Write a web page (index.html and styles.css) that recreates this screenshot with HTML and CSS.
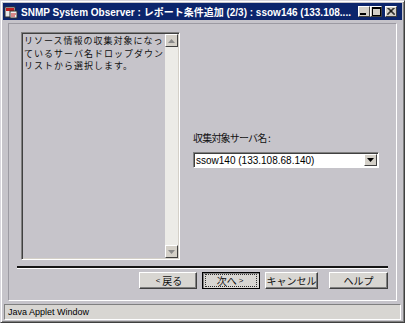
FILE: index.html
```html
<!DOCTYPE html>
<html lang="ja">
<head>
    <meta charset="UTF-8">
    <title>SNMP System Observer : レポート条件追加 (2/3)</title>
    <link rel="stylesheet" href="styles.css">
</head>
<body>
    <div class="window">
        <div class="titlebar">
            <svg class="app-icon" width="14" height="14" viewBox="0 0 14 14">
                <rect x="1" y="2" width="10" height="10" fill="#e8e8e8" stroke="#303030" stroke-width="1"/>
                <rect x="2" y="3" width="8" height="3" fill="#c02020"/>
                <rect x="6" y="6" width="7" height="7" fill="#f0f0f0" stroke="#303030" stroke-width="1"/>
                <path d="M7 9 L12 9 M7 11 L11 11" stroke="#c02020" stroke-width="1"/>
            </svg>
            <span class="title">SNMP System Observer : レポート条件追加 (2/3) : ssow146 (133.108....</span>
            <div class="title-buttons">
                <span class="tbtn"><svg width="8" height="7" viewBox="0 0 8 7"><rect x="0" y="5" width="6" height="2" fill="#000"/></svg></span>
                <span class="tbtn"><svg width="9" height="9" viewBox="0 0 9 9"><rect x="0.5" y="0.5" width="8" height="8" fill="none" stroke="#000"/><rect x="0" y="0" width="9" height="2" fill="#000"/></svg></span>
                <span class="tbtn close"><svg width="8" height="7" viewBox="0 0 8 7"><path d="M0.5 0 L7.5 7 M1.5 0 L8 6.5 M7.5 0 L0.5 7 M6.5 0 L0 6.5" stroke="#000" stroke-width="1"/></svg></span>
            </div>
        </div>

        <div class="panel">
            <div class="content">
                <div class="textarea">
                    <div class="textarea-text">
                        <div class="line">リソース情報の収集対象になっ</div>
                        <div class="line">ているサーバ名ドロップダウン</div>
                        <div class="line">リストから選択します。</div>
                    </div>
                    <div class="vscroll">
                        <div class="sb-btn"><svg width="7" height="4" viewBox="0 0 7 4"><path d="M3.5 0 L7 4 L0 4 Z" fill="#8a8a8a"/></svg></div>
                        <div class="sb-track"></div>
                        <div class="sb-btn"><svg width="7" height="4" viewBox="0 0 7 4"><path d="M0 0 L7 0 L3.5 4 Z" fill="#8a8a8a"/></svg></div>
                    </div>
                </div>
                <div class="field">
                    <label class="field-label">収集対象サーバ名 :</label>
                    <div class="select">
                        <span class="select-value">ssow140 (133.108.68.140)</span>
                        <span class="select-btn"><svg width="7" height="4" viewBox="0 0 7 4"><path d="M0 0 L7 0 L3.5 4 Z" fill="#000"/></svg></span>
                    </div>
                </div>
            </div>
            <div class="separator"></div>
            <div class="buttons">
                <button class="btn btn-back"><span class="lt">&lt;</span>戻る</button>
                <button class="btn btn-next default"><span class="focus">次へ<span class="lt">&gt;</span></span></button>
                <button class="btn btn-cancel">キャンセル</button>
                <button class="btn btn-help">ヘルプ</button>
            </div>
        </div>

        <div class="statusbar">Java Applet Window</div>
    </div>
</body>
</html>
```

FILE: styles.css
```css
body {
    margin: 0;
    background: #ffffff;
    font-family: "Noto Sans CJK JP", "Liberation Sans", sans-serif;
}
.window {
    width: 405px;
    height: 323px;
    box-sizing: border-box;
    background: #c6c4ca;
    border: 1px solid;
    border-color: #d8d6dc #404040 #404040 #d8d6dc;
    box-shadow: inset 1px 1px 0 #ffffff, inset -1px -1px 0 #808080;
    padding: 2px;
    display: flex;
    flex-direction: column;
}
.titlebar {
    height: 17px;
    background: #0c256c;
    display: flex;
    align-items: center;
    padding-left: 1px;
    flex-shrink: 0;
}
.app-icon {
    flex-shrink: 0;
}
.title {
    margin-left: 3px;
    color: #ffffff;
    font-family: "Liberation Sans", "Noto Sans CJK JP", sans-serif;
    font-weight: bold;
    font-size: 10px;
    white-space: nowrap;
    overflow: hidden;
    flex: 1;
}
.title-buttons {
    display: flex;
    margin-right: 5px;
}
.tbtn {
    width: 12px;
    height: 11px;
    box-sizing: border-box;
    background: #d4d0c8;
    border: 1px solid;
    border-color: #ffffff #404040 #404040 #ffffff;
    display: flex;
    align-items: center;
    justify-content: center;
}
.tbtn.close {
    margin-left: 3px;
}
.panel {
    margin: 3px 5px 0 5px;
    flex: 1;
    border: 1px solid;
    border-color: #9c9aa2 #ffffff #ffffff #9c9aa2;
    display: flex;
    flex-direction: column;
}
.content {
    display: flex;
    padding: 8px 0 0 12px;
}
.textarea {
    width: 159px;
    height: 228px;
    box-sizing: border-box;
    border: 1px solid;
    border-color: #808080 #ffffff #ffffff #808080;
    box-shadow: inset 1px 1px 0 #404040, inset -1px -1px 0 #d4d0c8;
    display: flex;
    padding: 1px 1px 1px 2px;
}
.textarea-text {
    flex: 1;
    padding-top: 1px;
}
.line {
    height: 12.5px;
    font-size: 9px;
    line-height: 12.5px;
    letter-spacing: 1px;
    color: #101010;
    white-space: nowrap;
}
.vscroll {
    width: 13px;
    display: flex;
    flex-direction: column;
    background: #ecebe7;
}
.sb-btn {
    height: 13px;
    box-sizing: border-box;
    background: #d4d0c8;
    border: 1px solid;
    border-color: #ffffff #404040 #404040 #ffffff;
    display: flex;
    align-items: center;
    justify-content: center;
}
.sb-track {
    flex: 1;
}
.field {
    margin-left: 13px;
    padding-top: 99px;
    display: flex;
    flex-direction: column;
}
.field-label {
    font-size: 10px;
    line-height: 14px;
    letter-spacing: -0.8px;
    color: #101010;
}
.select {
    margin-top: 7px;
    width: 186px;
    height: 16px;
    box-sizing: border-box;
    background: #ffffff;
    border: 1px solid;
    border-color: #808080 #ffffff #ffffff #808080;
    box-shadow: inset 1px 1px 0 #404040;
    display: flex;
    align-items: stretch;
    padding: 1px 1px 0 2px;
}
.select-value {
    flex: 1;
    font-family: "Liberation Sans", sans-serif;
    font-size: 10px;
    line-height: 13px;
    color: #000000;
}
.select-btn {
    width: 13px;
    box-sizing: border-box;
    background: #d4d0c8;
    border: 1px solid;
    border-color: #ffffff #404040 #404040 #ffffff;
    display: flex;
    align-items: center;
    justify-content: center;
    margin-bottom: 1px;
}
.separator {
    margin: 6px 8px 0 8px;
    border-top: 2px solid #161616;
    border-bottom: 1px solid #ffffff;
}
.buttons {
    display: flex;
    justify-content: flex-end;
    padding-right: 8px;
    margin-top: 3px;
}
.btn {
    height: 17px;
    box-sizing: border-box;
    padding: 0;
    margin: 0;
    background: #d8d6d2;
    border: 1px solid;
    border-color: #ffffff #404040 #404040 #ffffff;
    box-shadow: inset -1px -1px 0 #808080;
    font-family: "Noto Sans CJK JP", sans-serif;
    font-size: 10px;
    line-height: 13px;
    color: #101010;
    display: flex;
    align-items: center;
    justify-content: center;
}
.btn-back {
    width: 58px;
}
.btn-next {
    width: 58px;
    margin-left: 5px;
}
.btn-cancel {
    width: 53px;
    margin-left: 5px;
}
.btn-help {
    width: 59px;
    margin-left: 11px;
}
.btn.default {
    border: 1px solid #000000;
    box-shadow: inset 1px 1px 0 #808080;
}
.focus {
    width: 50px;
    height: 11px;
    border: 1px dotted #303030;
    display: flex;
    align-items: center;
    justify-content: center;
}
.lt {
    font-family: "Liberation Sans", sans-serif;
    font-size: 8px;
    margin: 0 2px;
}
.statusbar {
    margin: 3px 1px 0 1px;
    height: 16px;
    box-sizing: border-box;
    background: #d8d6d2;
    border: 1px solid;
    border-color: #808080 #ffffff #ffffff #808080;
    font-family: "Liberation Sans", sans-serif;
    font-size: 9px;
    line-height: 14px;
    padding-left: 3px;
    color: #000000;
    flex-shrink: 0;
}
```
